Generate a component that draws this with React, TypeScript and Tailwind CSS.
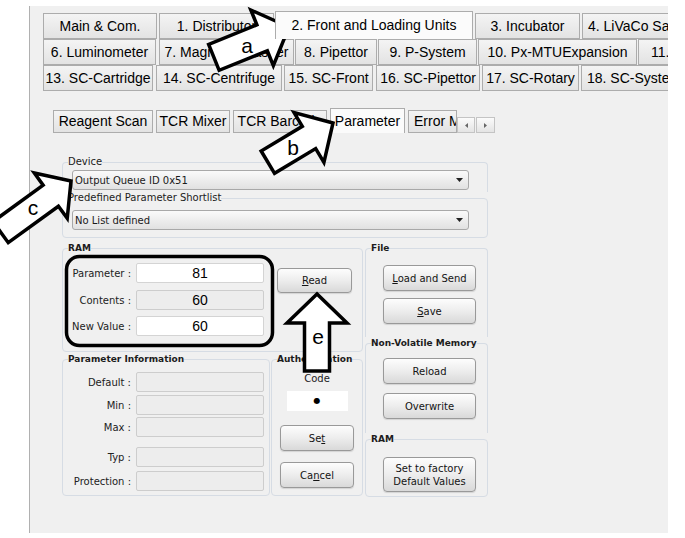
import React from 'react';

type Tab = { label: string; cls: string; active?: boolean };

const outerRows: Tab[][] = [
  [
    { label: 'Main & Com.', cls: 'w-[114px]' },
    { label: '1. Distributor', cls: 'ml-[2px] w-[115px]' },
    { label: '2. Front and Loading Units', cls: 'ml-[1px] w-[198px]', active: true },
    { label: '3. Incubator', cls: 'ml-[2px] w-[105px]' },
    { label: '4. LiVaCo Sampler', cls: 'ml-[2px] pl-[5px] pr-[10px]' },
  ],
  [
    { label: '6. Luminometer', cls: 'w-[113px]' },
    { label: '7. Magnetic Washer', cls: 'ml-[3px] w-[135px]' },
    { label: '8. Pipettor', cls: 'ml-[1px] w-[82px]' },
    { label: '9. P-System', cls: 'ml-[1px] w-[99px]' },
    { label: '10. Px-MTUExpansion', cls: 'ml-[1px] w-[159px]' },
    { label: '11. Reagent Pack', cls: 'ml-[1px] pl-[12px] pr-[10px]' },
  ],
  [
    { label: '13. SC-Cartridge', cls: 'w-[110px]' },
    { label: '14. SC-Centrifuge', cls: 'ml-[3px] w-[126px]' },
    { label: '15. SC-Front', cls: 'ml-[2px] w-[89px]' },
    { label: '16. SC-Pipettor', cls: 'ml-[3px] w-[104px]' },
    { label: '17. SC-Rotary', cls: 'ml-[2px] w-[97px]' },
    { label: '18. SC-System', cls: 'ml-[2px] pl-[5px] pr-[10px]' },
  ],
];

const innerTabs: Tab[] = [
  { label: 'Reagent Scan', cls: 'w-[100px] justify-center' },
  { label: 'TCR Mixer', cls: 'ml-[3px] w-[74px] justify-center' },
  { label: 'TCR Barcode', cls: 'ml-[3px] w-[94px] justify-center' },
  { label: 'Parameter', cls: 'ml-[3px] w-[75px] justify-center', active: true },
  { label: 'Error Messages', cls: 'ml-[3px] w-[49px] pl-[5px] overflow-hidden' },
];

function OuterTab({ t }: { t: Tab }) {
  return (
    <div
      className={`flex-none flex items-center justify-center whitespace-nowrap border border-[#acacac] ${
        t.active
          ? '-mt-[2px] h-[28px] bg-[#fbfbfb] border-b-0 relative z-10'
          : 'h-[26px] bg-linear-to-b from-[#f4f4f4] to-[#e3e3e3]'
      } ${t.cls}`}
    >
      {t.label}
    </div>
  );
}

function InnerTab({ t }: { t: Tab }) {
  return (
    <div
      className={`flex-none flex items-center whitespace-nowrap border border-[#acacac] ${
        t.active
          ? '-mt-[2px] h-[25px] bg-[#fbfbfb] border-b-0'
          : 'h-[23px] bg-linear-to-b from-[#f4f4f4] to-[#e3e3e3]'
      } ${t.cls}`}
    >
      {t.label}
    </div>
  );
}

function Btn({ className, children }: { className: string; children: React.ReactNode }) {
  return (
    <div
      className={`flex items-center justify-center text-center border border-[#999999] rounded-[4px] bg-linear-to-b from-[#fdfdfd] via-[#ededed] to-[#d9d9d9] shadow-[0_1px_1px_rgba(0,0,0,0.12)] text-[#141414] ${className}`}
    >
      {children}
    </div>
  );
}

function Dropdown({ text, className }: { text: string; className: string }) {
  return (
    <div
      className={`ml-[4px] w-[397px] h-[20px] flex items-center justify-between pl-[2px] pr-[5px] border border-[#a8a8a8] rounded-[3px] bg-linear-to-b from-[#fafafa] to-[#e1e1e1] ${className}`}
    >
      <span>{text}</span>
      <svg width="7" height="4" viewBox="0 0 7 4">
        <path d="M0 0h7L3.5 4z" fill="#222" />
      </svg>
    </div>
  );
}

function Field({ label, value, kind, className }: { label: string; value?: string; kind: 'white' | 'gray'; className: string }) {
  return (
    <div className={`flex items-center ${className}`}>
      <span className="w-[63px] text-right text-[#222]">{label}</span>
      <div
        className={`ml-[5px] w-[128px] h-[20px] rounded-[2px] flex items-center justify-center font-['Liberation_Sans',Arial,sans-serif] text-[14px] text-black ${
          kind === 'white' ? 'bg-white border border-[#d4d4d4]' : 'bg-[#ededed] border border-[#cdcdcd]'
        }`}
      >
        {value}
      </div>
    </div>
  );
}

const groupCls = 'border border-[#d6dce4] rounded-[4px] px-[5px]';
const legendBold = 'leading-[12px] text-[9px] font-bold text-[#1c1c1c]';
const legendReg = 'leading-[12px] text-[10px] text-[#1c1c1c]';

function Arrow({ x, y, angle, lh, hw, sw, ls }: { x: number; y: number; angle: number; lh: number; hw: number; sw: number; ls: number }) {
  const e = lh + ls;
  const pts = `0,0 ${-lh},${-hw} ${-lh},${-sw} ${-e},${-sw} ${-e},${sw} ${-lh},${sw} ${-lh},${hw}`;
  return (
    <polygon
      points={pts}
      transform={`translate(${x} ${y}) rotate(${angle})`}
      fill="white"
      stroke="black"
      strokeWidth={3.5}
      strokeLinejoin="miter"
    />
  );
}

function Letter({ x, y, c }: { x: number; y: number; c: string }) {
  return (
    <text x={x} y={y} fontSize={21} fontFamily="Liberation Sans, Arial, sans-serif" textAnchor="middle" dominantBaseline="central">
      {c}
    </text>
  );
}

export default function App() {
  return (
    <div className="relative w-[685px] h-[538px] overflow-hidden bg-white pt-[6px] pl-[29px] font-['DejaVu_Sans',sans-serif] text-[10px] text-[#1a1a1a]">
      <div className="w-[639px] h-[527px] bg-[#f0f0f0] border-l border-[#b0b0b0] overflow-hidden pt-[7px] pl-[13px]">
        {/* outer module tabs */}
        <div className="font-['Liberation_Sans',Arial,sans-serif] text-[14px] text-black">
          {outerRows.map((row, i) => (
            <div key={i} className="flex items-start h-[26px]">
              {row.map((t) => (
                <OuterTab key={t.label} t={t} />
              ))}
            </div>
          ))}
        </div>

        {/* inner tabs */}
        <div className="mt-[19px] ml-[10px] flex items-start h-[23px] font-['Liberation_Sans',Arial,sans-serif] text-[14px] text-black">
          {innerTabs.map((t) => (
            <InnerTab key={t.label} t={t} />
          ))}
          <div className="flex-none mt-[7px] flex">
            <div className="w-[18px] h-[16px] border border-[#c4c4c4] bg-linear-to-b from-[#fbfbfb] to-[#e4e4e4] flex items-center justify-center">
              <svg width="3" height="5" viewBox="0 0 3 5">
                <path d="M3 0v5L0 2.5z" fill="#666" />
              </svg>
            </div>
            <div className="ml-[1px] w-[19px] h-[16px] border border-[#c4c4c4] bg-linear-to-b from-[#fbfbfb] to-[#e4e4e4] flex items-center justify-center">
              <svg width="3" height="5" viewBox="0 0 3 5">
                <path d="M0 0v5L3 2.5z" fill="#666" />
              </svg>
            </div>
          </div>
        </div>

        {/* parameter page */}
        <div className="mt-[23px] ml-[19px] w-[426px]">
          <fieldset className={`${groupCls} h-[36px] border-b-0 rounded-b-none`}>
            <legend className={legendReg}>Device</legend>
            <Dropdown text="Output Queue ID 0x51" className="mt-[2px]" />
          </fieldset>
          <fieldset className={`${groupCls} h-[46px]`}>
            <legend className={legendReg}>Predefined Parameter Shortlist</legend>
            <Dropdown text="No List defined" className="mt-[6px]" />
          </fieldset>

          <div className="mt-[4px] flex items-start">
            <div className="w-[301px] flex-none">
              <fieldset className={`${groupCls} h-[110px]`}>
                <legend className={legendBold}>RAM</legend>
                <div className="flex items-start">
                  <div>
                    <Field label="Parameter :" value="81" kind="white" className="mt-[9px]" />
                    <Field label="Contents :" value="60" kind="gray" className="mt-[7px]" />
                    <Field label="New Value :" value="60" kind="white" className="mt-[6px]" />
                  </div>
                  <Btn className="ml-[13px] mt-[14px] w-[75px] h-[25px]">
                    <span>
                      <span className="underline">R</span>ead
                    </span>
                  </Btn>
                </div>
              </fieldset>

              <div className="mt-[1px] flex items-start">
                <fieldset className={`${groupCls} w-[208px] h-[143px] flex-none`}>
                  <legend className={legendBold}>Parameter Information</legend>
                  <Field label="Default :" kind="gray" className="mt-[7px]" />
                  <Field label="Min :" kind="gray" className="mt-[3px]" />
                  <Field label="Max :" kind="gray" className="mt-[2px]" />
                  <Field label="Typ :" kind="gray" className="mt-[10px]" />
                  <Field label="Protection :" kind="gray" className="mt-[4px]" />
                </fieldset>
                <fieldset className={`${groupCls} ml-[1px] w-[92px] h-[143px] flex-none`}>
                  <legend className={legendBold}>Authentication</legend>
                  <div className="flex flex-col items-center">
                    <span className="mt-[8px] leading-[12px] text-[#222]">Code</span>
                    <div className="mt-[6px] w-[61px] h-[20px] bg-white flex items-center justify-center text-[8px] text-black">
                      ●
                    </div>
                    <Btn className="mt-[14px] w-[74px] h-[26px]">
                      <span>
                        Se<span className="underline">t</span>
                      </span>
                    </Btn>
                    <Btn className="mt-[11px] w-[74px] h-[26px]">
                      <span>
                        Ca<span className="underline">n</span>cel
                      </span>
                    </Btn>
                  </div>
                </fieldset>
              </div>
            </div>

            <div className="ml-[2px] w-[123px] flex-none">
              <fieldset className={`${groupCls} h-[95px] border-b-0 rounded-b-none`}>
                <legend className={legendBold}>File</legend>
                <Btn className="ml-[12px] mt-[11px] w-[93px] h-[26px]">
                  <span>
                    <span className="underline">L</span>oad and Send
                  </span>
                </Btn>
                <Btn className="ml-[12px] mt-[7px] w-[93px] h-[26px]">
                  <span>
                    <span className="underline">S</span>ave
                  </span>
                </Btn>
              </fieldset>
              <fieldset className={`${groupCls} h-[96px] border-b-0 rounded-b-none`}>
                <legend className={legendBold}>Non-Volatile Memory</legend>
                <Btn className="ml-[12px] mt-[9px] w-[93px] h-[26px]">Reload</Btn>
                <Btn className="ml-[12px] mt-[9px] w-[93px] h-[26px]">Overwrite</Btn>
              </fieldset>
              <fieldset className={`${groupCls} h-[64px]`}>
                <legend className={legendBold}>RAM</legend>
                <Btn className="ml-[12px] mt-[12px] w-[93px] h-[35px] leading-[13px]">
                  <span>
                    Set to factory
                    <br />
                    Default Values
                  </span>
                </Btn>
              </fieldset>
            </div>
          </div>
        </div>
      </div>

      {/* annotation overlay */}
      <svg className="absolute left-0 top-0 pointer-events-none" width="685" height="538" viewBox="0 0 685 538">
        <rect x="66.5" y="256.5" width="206" height="89" rx="13" fill="none" stroke="black" strokeWidth="3.5" />
        <Arrow x={289} y={27} angle={-22} lh={29} hw={30} sw={14} ls={52} />
        <Letter x={247} y={45} c="a" />
        <Arrow x={333} y={123} angle={-31} lh={28} hw={29} sw={13} ls={48} />
        <Letter x={293} y={147} c="b" />
        <Arrow x={71} y={181} angle={-36} lh={25} hw={28} sw={13} ls={62} />
        <Letter x={33} y={207} c="c" />
        <Arrow x={317} y={294} angle={-90} lh={29} hw={30} sw={12.5} ls={48} />
        <Letter x={318} y={336} c="e" />
      </svg>
    </div>
  );
}
